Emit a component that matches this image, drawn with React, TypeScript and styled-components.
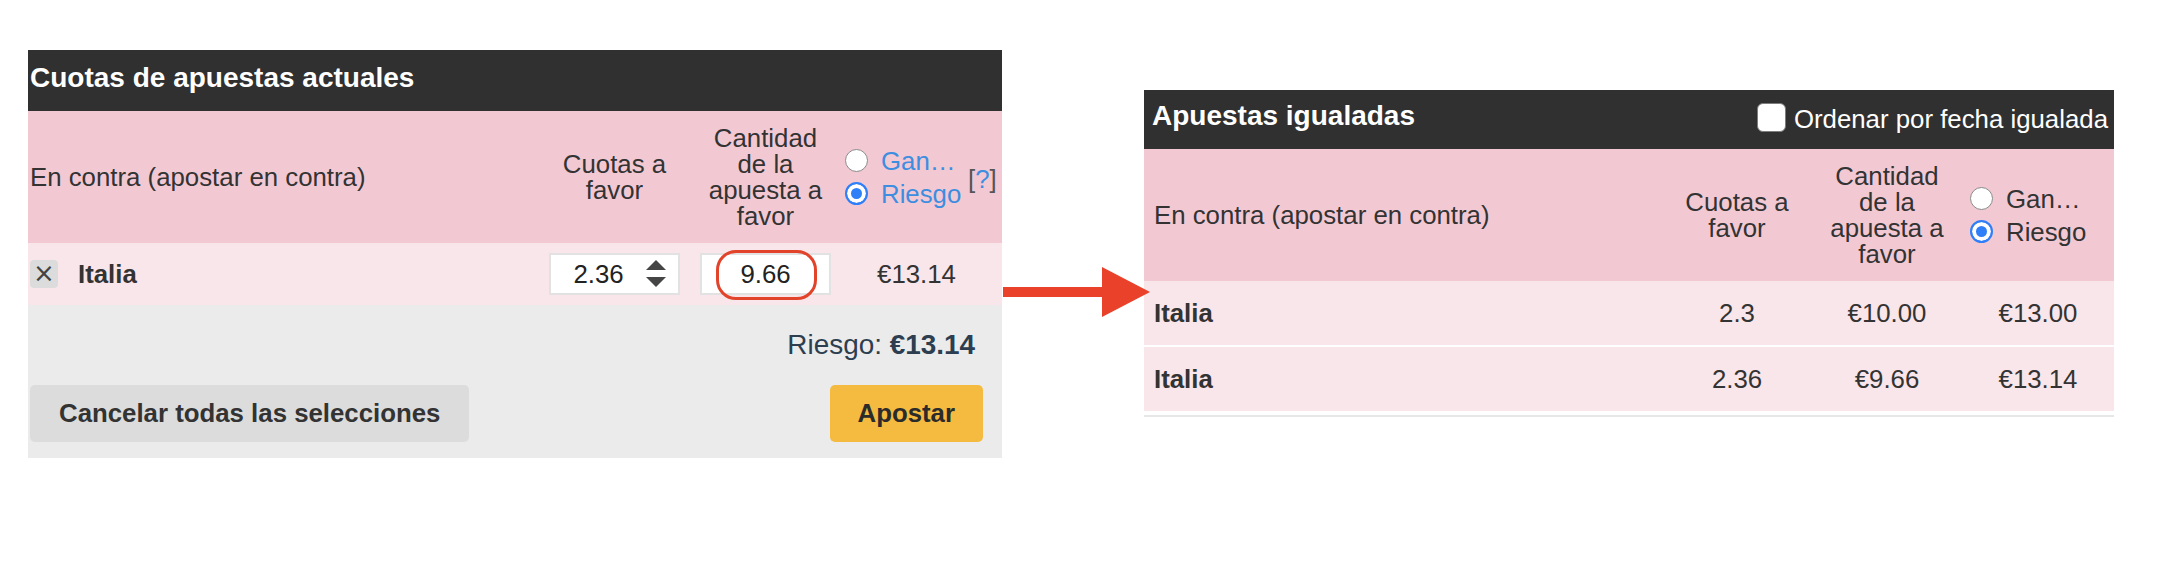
import React from "react";
import styled, { createGlobalStyle } from "styled-components";

const GlobalStyle = createGlobalStyle`
  html, body { margin: 0; padding: 0; background: #ffffff; }
  body { font-family: "Liberation Sans", Arial, Helvetica, sans-serif; color: #333333; }
  * { box-sizing: border-box; }
`;

const Page = styled.div`
  position: relative;
  display: flex;
  align-items: flex-start;
  gap: 142px;
  padding: 50px 0 0 28px;
  width: 2166px;
  height: 578px;
`;

const Panel = styled.section<{ $width: number; $offset?: number }>`
  width: ${(p) => p.$width}px;
  margin-top: ${(p) => p.$offset ?? 0}px;
  display: flex;
  flex-direction: column;
`;

const PanelHeader = styled.header<{ $height: number; $padX: number; $padTop: number }>`
  height: ${(p) => p.$height}px;
  background: #303030;
  color: #ffffff;
  display: flex;
  justify-content: space-between;
  align-items: flex-start;
  padding: ${(p) => p.$padTop}px ${(p) => p.$padX}px 0 ${(p) => p.$padX}px;
`;

const Title = styled.h2`
  margin: 0;
  font-size: 28px;
  line-height: 32px;
  font-weight: 700;
  color: #ffffff;
  white-space: nowrap;
`;

const SortToggle = styled.label`
  display: inline-flex;
  align-items: flex-end;
  gap: 8px;
  margin-top: 3px;
  margin-right: -2px;
  font-size: 25.8px;
  line-height: 29px;
  color: #ffffff;
  white-space: nowrap;
`;

const Checkbox = styled.input`
  appearance: none;
  margin: 0 0 2px 0;
  width: 29px;
  height: 29px;
  border-radius: 6px;
  border: 1.5px solid #7d7d7d;
  background: #ffffff;
`;

const Row = styled.div<{ $cols: string; $height: number; $tone: "head" | "body" }>`
  display: grid;
  grid-template-columns: ${(p) => p.$cols};
  height: ${(p) => p.$height}px;
  align-items: center;
  background: ${(p) => (p.$tone === "head" ? "#f2c9d3" : "#f9e6ea")};
  font-size: 25.8px;
  line-height: 26px;
  color: #333333;
`;

const RowList = styled.div`
  display: flex;
  flex-direction: column;
  gap: 2px;
`;

const BottomRule = styled.div`
  margin-top: 4px;
  height: 2px;
  background: #e7e7e7;
`;

const NameCell = styled.div<{ $pad: number; $bold?: boolean }>`
  display: flex;
  align-items: center;
  gap: 20px;
  padding-left: ${(p) => p.$pad}px;
  font-weight: ${(p) => (p.$bold ? 700 : 400)};
  white-space: nowrap;
`;

const HeadCell = styled.div`
  text-align: center;
`;

const NumCell = styled.div<{ $padRight?: number }>`
  text-align: center;
  padding-right: ${(p) => p.$padRight ?? 0}px;
  white-space: nowrap;
`;

const RiskHead = styled.div<{ $padLeft: number }>`
  display: flex;
  align-items: center;
  padding-left: ${(p) => p.$padLeft}px;
`;

const RadioGroup = styled.div`
  display: flex;
  flex-direction: column;
`;

const RadioOption = styled.label`
  display: flex;
  align-items: center;
  gap: 13px;
  height: 33px;
`;

const Radio = styled.input`
  appearance: none;
  margin: 0;
  flex: none;
  width: 23px;
  height: 23px;
  border-radius: 50%;
  border: 1.5px solid #8a8a8a;
  background: #ffffff;
  &:checked {
    border: 2px solid #2f7ff8;
    background: #2f7ff8;
    box-shadow: inset 0 0 0 4px #ffffff;
  }
`;

const RadioText = styled.span<{ $link?: boolean }>`
  display: block;
  width: 82px;
  white-space: nowrap;
  color: ${(p) => (p.$link ? "#3d8ee0" : "#333333")};
`;

const Help = styled.span`
  margin-left: 5px;
  margin-top: 4px;
  color: #555555;
  white-space: nowrap;
`;

const HelpMark = styled.span`
  color: #3d8ee0;
`;

const RemoveButton = styled.button`
  width: 28px;
  height: 28px;
  padding: 0 0 2px 0;
  border: none;
  border-radius: 4px;
  background: #dcdcdc;
  color: #444444;
  font-family: "DejaVu Sans", "Liberation Sans", sans-serif;
  font-size: 26px;
  line-height: 26px;
  display: flex;
  align-items: center;
  justify-content: center;
`;

const InputCell = styled.div`
  display: flex;
  justify-content: center;
`;

const InputBox = styled.div`
  position: relative;
  width: 131px;
  height: 42px;
  border: 2px solid #e2e2e2;
  background: #ffffff;
  display: flex;
  align-items: center;
`;

const InputField = styled.input`
  flex: 1;
  min-width: 0;
  height: 100%;
  border: none;
  outline: none;
  background: transparent;
  font-family: inherit;
  font-size: 25.8px;
  color: #222222;
  text-align: center;
  padding: 0;
`;

const Spinner = styled.svg`
  flex: none;
  margin-right: 12px;
`;

const Annotation = styled.span`
  position: absolute;
  left: 14px;
  right: 12px;
  top: -5px;
  bottom: -7px;
  border: 3.5px solid #e2432b;
  border-radius: 20px;
  pointer-events: none;
`;

const Footer = styled.div`
  background: #ebebeb;
  padding: 24px 19px 16px 2px;
  display: flex;
  flex-direction: column;
  gap: 24px;
`;

const Summary = styled.div`
  align-self: flex-end;
  padding-right: 8px;
  font-size: 27.9px;
  line-height: 32px;
  color: #2c3e50;
`;

const ButtonRow = styled.div`
  display: flex;
  justify-content: space-between;
`;

const ActionButton = styled.button<{ $variant: "muted" | "primary" }>`
  height: 57px;
  padding: 0 ${(p) => (p.$variant === "primary" ? 28 : 29)}px;
  border: none;
  border-radius: 5px;
  background: ${(p) => (p.$variant === "primary" ? "#f5bb41" : "#dcdcdc")};
  color: ${(p) => (p.$variant === "primary" ? "#2b2b2b" : "#333333")};
  font-family: inherit;
  font-size: 25.8px;
  font-weight: 700;
`;

const Arrow = styled.svg`
  position: absolute;
  left: 1003px;
  top: 267px;
`;

const leftCols = "511px 151px 151px 161px";
const rightCols = "518px 150px 150px 152px";

const StakeHeader = () => (
  <HeadCell>
    Cantidad
    <br />
    de la
    <br />
    apuesta a
    <br />
    favor
  </HeadCell>
);

const OddsHeader = () => (
  <HeadCell>
    Cuotas a
    <br />
    favor
  </HeadCell>
);

const RiskToggle = ({ name, link }: { name: string; link?: boolean }) => (
  <RadioGroup>
    <RadioOption title="Ganancias">
      <Radio type="radio" name={name} readOnly />
      <RadioText $link={link}>Gan…</RadioText>
    </RadioOption>
    <RadioOption>
      <Radio type="radio" name={name} defaultChecked />
      <RadioText $link={link}>Riesgo</RadioText>
    </RadioOption>
  </RadioGroup>
);

const matched = [
  { name: "Italia", odds: "2.3", stake: "€10.00", risk: "€13.00" },
  { name: "Italia", odds: "2.36", stake: "€9.66", risk: "€13.14" },
];

export default function App() {
  return (
    <>
      <GlobalStyle />
      <Page>
        <Panel $width={974}>
          <PanelHeader $height={61} $padX={2} $padTop={12}>
            <Title>Cuotas de apuestas actuales</Title>
          </PanelHeader>
          <Row $cols={leftCols} $height={132} $tone="head">
            <NameCell $pad={2}>En contra (apostar en contra)</NameCell>
            <OddsHeader />
            <StakeHeader />
            <RiskHead $padLeft={4}>
              <RiskToggle name="current-mode" link />
              <Help>
                [<HelpMark>?</HelpMark>]
              </Help>
            </RiskHead>
          </Row>
          <Row $cols={leftCols} $height={62} $tone="body">
            <NameCell $pad={2} $bold>
              <RemoveButton aria-label="Quitar">×</RemoveButton>
              Italia
            </NameCell>
            <InputCell>
              <InputBox>
                <InputField defaultValue="2.36" />
                <Spinner width="20" height="28" viewBox="0 0 20 28">
                  <path d="M10 0 L20 10 L0 10 Z" fill="#454545" />
                  <path d="M0 17 L20 17 L10 27 Z" fill="#454545" />
                </Spinner>
              </InputBox>
            </InputCell>
            <InputCell>
              <InputBox>
                <InputField defaultValue="9.66" />
                <Annotation />
              </InputBox>
            </InputCell>
            <NumCell $padRight={10}>€13.14</NumCell>
          </Row>
          <Footer>
            <Summary>
              Riesgo: <b>€13.14</b>
            </Summary>
            <ButtonRow>
              <ActionButton $variant="muted">Cancelar todas las selecciones</ActionButton>
              <ActionButton $variant="primary">Apostar</ActionButton>
            </ButtonRow>
          </Footer>
        </Panel>

        <Panel $width={970} $offset={40}>
          <PanelHeader $height={59} $padX={8} $padTop={10}>
            <Title>Apuestas igualadas</Title>
            <SortToggle>
              <Checkbox type="checkbox" />
              Ordenar por fecha igualada
            </SortToggle>
          </PanelHeader>
          <Row $cols={rightCols} $height={132} $tone="head">
            <NameCell $pad={10}>En contra (apostar en contra)</NameCell>
            <OddsHeader />
            <StakeHeader />
            <RiskHead $padLeft={8}>
              <RiskToggle name="matched-mode" />
            </RiskHead>
          </Row>
          <RowList>
            {matched.map((m, i) => (
              <Row key={i} $cols={rightCols} $height={64} $tone="body">
                <NameCell $pad={10} $bold>
                  {m.name}
                </NameCell>
                <NumCell>{m.odds}</NumCell>
                <NumCell>{m.stake}</NumCell>
                <NumCell>{m.risk}</NumCell>
              </Row>
            ))}
          </RowList>
          <BottomRule />
        </Panel>

        <Arrow width="147" height="50" viewBox="0 0 147 50">
          <rect x="0" y="20" width="100" height="10" fill="#e9412a" />
          <path d="M99 0 L147 25 L99 50 Z" fill="#e9412a" />
        </Arrow>
      </Page>
    </>
  );
}
